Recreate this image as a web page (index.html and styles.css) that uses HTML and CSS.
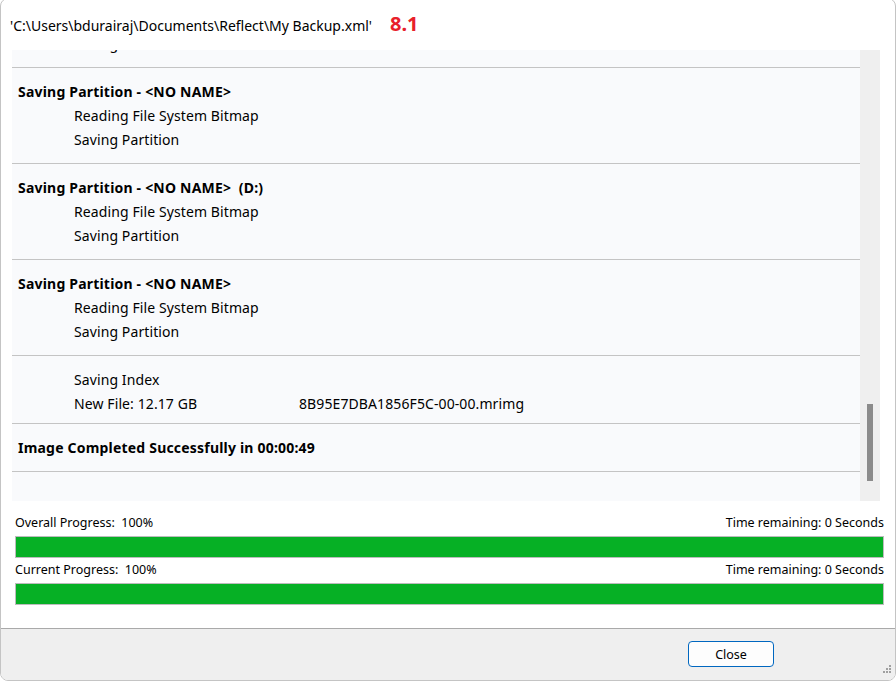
FILE: index.html
```html
<!DOCTYPE html>
<html lang="en">
<head>
  <meta charset="UTF-8" />
  <title>Reflect - Backup</title>
  <link rel="stylesheet" href="styles.css">
</head>
<body>
  <div class="window">
    <div class="titlebar">
      <span class="path">'C:\Users\bdurairaj\Documents\Reflect\My Backup.xml'</span>
      <span class="version">8.1</span>
    </div>

    <div class="log-area">
      <div class="log">
        <div class="log-inner">
          <!-- scrolled: only the tail of the previous section shows -->
          <div class="section tail">
            <div class="row sub">Saving Partition</div>
          </div>
          <div class="section">
            <div class="row head">Saving Partition - &lt;NO NAME&gt;</div>
            <div class="row sub">Reading File System Bitmap</div>
            <div class="row sub">Saving Partition</div>
          </div>
          <div class="section">
            <div class="row head">Saving Partition - &lt;NO NAME&gt;&nbsp; (D:)</div>
            <div class="row sub">Reading File System Bitmap</div>
            <div class="row sub">Saving Partition</div>
          </div>
          <div class="section">
            <div class="row head">Saving Partition - &lt;NO NAME&gt;</div>
            <div class="row sub">Reading File System Bitmap</div>
            <div class="row sub">Saving Partition</div>
          </div>
          <div class="section short">
            <div class="row sub">Saving Index</div>
            <div class="row sub file"><span class="file-size">New File: 12.17 GB</span><span>8B95E7DBA1856F5C-00-00.mrimg</span></div>
          </div>
          <div class="section">
            <div class="row head">Image Completed Successfully in 00:00:49</div>
          </div>
        </div>
      </div>
      <div class="scrollbar"><div class="thumb"></div></div>
    </div>

    <div class="progress">
      <div class="progress-label"><span>Overall Progress:&nbsp; 100%</span><span>Time remaining: 0 Seconds</span></div>
      <div class="bar"><div class="fill" style="width: 100%;"></div></div>
      <div class="progress-label"><span>Current Progress:&nbsp; 100%</span><span>Time remaining: 0 Seconds</span></div>
      <div class="bar"><div class="fill" style="width: 100%;"></div></div>
    </div>

    <div class="footer">
      <button class="close-btn">Close</button>
      <svg class="grip" width="12" height="12" viewBox="0 0 12 12">
        <rect x="9" y="0" width="2" height="2" fill="#a0a0a0"/>
        <rect x="6" y="3" width="2" height="2" fill="#a0a0a0"/>
        <rect x="9" y="3" width="2" height="2" fill="#a0a0a0"/>
        <rect x="3" y="6" width="2" height="2" fill="#a0a0a0"/>
        <rect x="6" y="6" width="2" height="2" fill="#a0a0a0"/>
        <rect x="9" y="6" width="2" height="2" fill="#a0a0a0"/>
      </svg>
    </div>
  </div>
</body>
</html>
```

FILE: styles.css
```css
body {
  margin: 0;
  padding: 0;
  background-color: white;
  font-family: "Noto Sans", "Open Sans", sans-serif;
  color: #000;
  overflow: hidden;
}
.window {
  margin-top: -2px;
  width: 896px;
  height: 683px;
  box-sizing: border-box;
  border: 1px solid #c4c4c4;
  border-radius: 8px;
  background-color: white;
  display: flex;
  flex-direction: column;
  overflow: hidden;
  position: relative;
}
.titlebar {
  height: 51px;
  box-sizing: border-box;
  padding: 11px 0 0 9px;
  display: flex;
  align-items: baseline;
  gap: 18px;
  flex-shrink: 0;
}
.path { font-size: 14px; line-height: 20px; }
.version {
  font-size: 20px;
  font-weight: bold;
  color: #e8202a;
}
.log-area {
  display: flex;
  height: 451px;
  margin-left: 11px;
  flex-shrink: 0;
}
.log {
  width: 848px;
  height: 100%;
  background-color: #f9fafc;
  overflow: hidden;
}
.log-inner { margin-top: -18px; }
.section {
  padding: 12px 0 11px 0;
  border-bottom: 1px solid #c4c4c4;
}
.section.tail { padding-top: 0; }
.section.short { padding-bottom: 7px; }
.row {
  height: 24px;
  line-height: 24px;
  font-size: 14px;
  white-space: nowrap;
}
.row.head { font-weight: bold; padding-left: 6px; letter-spacing: 0.2px; }
.row.sub { padding-left: 62px; letter-spacing: 0.1px; }
.row.file { display: flex; }
.file-size { width: 225px; }
.scrollbar {
  width: 20px;
  height: 100%;
  background-color: #efefef;
  position: relative;
}
.thumb {
  position: absolute;
  left: 7px;
  top: 354px;
  width: 6px;
  height: 77px;
  background-color: #8b8b8b;
}
.progress {
  height: 128px;
  box-sizing: border-box;
  padding: 14px 11px 0 14px;
  border-bottom: 1px solid #a9a9a9;
  flex-shrink: 0;
}
.progress-label {
  display: flex;
  justify-content: space-between;
  font-size: 12.5px;
  line-height: 16px;
  height: 16px;
}
.bar {
  height: 22px;
  box-sizing: border-box;
  border: 1px solid #bcbcbc;
  background-color: #e6e6e6;
  margin: 5px 0 4px 0;
}
.fill {
  height: 100%;
  background-color: #06b025;
}
.footer {
  flex: 1;
  background-color: #efefef;
  display: flex;
  justify-content: flex-end;
  align-items: flex-start;
  padding: 12px 121px 0 0;
  position: relative;
}
.close-btn {
  width: 86px;
  height: 26px;
  border: 1px solid #0067c0;
  border-radius: 4px;
  background-color: #fdfdfd;
  font-family: "Noto Sans", "Open Sans", sans-serif;
  font-size: 12.5px;
  color: #000;
  padding: 0;
}
.grip {
  position: absolute;
  right: 3px;
  bottom: 3px;
}
```
